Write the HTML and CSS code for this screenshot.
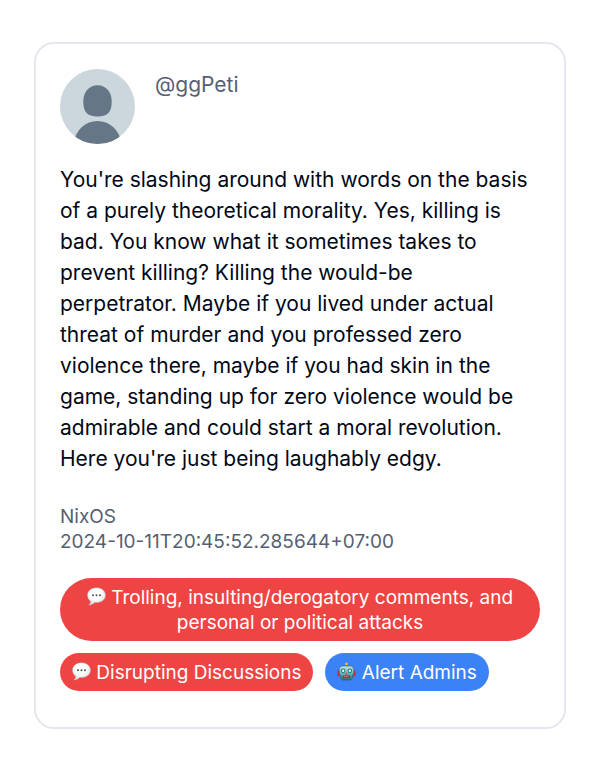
FILE: index.html
```html
<!DOCTYPE html>
<html lang="en">
<head>
<meta charset="utf-8">
<meta name="viewport" content="width=device-width, initial-scale=1">
<title>Post by @ggPeti</title>
<link rel="stylesheet" href="styles.css">
</head>
<body>
<svg class="symbols" aria-hidden="true">
  <defs>
    <radialGradient id="bubble-fill" cx="45%" cy="35%" r="65%">
      <stop offset="0.5" stop-color="#fff"/>
      <stop offset="1" stop-color="#d3d6d7"/>
    </radialGradient>
    <linearGradient id="robot-fill" x1="0" y1="0" x2="0" y2="1">
      <stop offset="0" stop-color="#c4e4e4"/>
      <stop offset="0.5" stop-color="#74b4ba"/>
      <stop offset="1" stop-color="#2f6770"/>
    </linearGradient>
    <symbol id="bubble" viewBox="0 0 20 20">
      <path d="M10 .8C4.700.8.500 4.100.500 8.700c0 2.800 1.400 4.900 3.300 6.200-.1 1.700-.8 3-2 4.100 2.600 0 4.800-1.100 6.200-2.700 6.400.7 11.500-2.600 11.500-7.600C19.500 4.100 15.300.8 10 .8z" fill="url(#bubble-fill)" stroke="#c5b4b4" stroke-width=".4"/>
      <g fill="#494949"><circle cx="6.300" cy="8.700" r="1"/><circle cx="10" cy="8.700" r="1"/><circle cx="13.700" cy="8.700" r="1"/></g>
    </symbol>
    <symbol id="robot" viewBox="0 0 20 20">
      <path d="M9 3h2v3H9z" fill="#9c6d38"/>
      <circle cx="10" cy="2" r="1.600" fill="#f2b72e"/>
      <rect x=".5" y="9" width="2.400" height="6" rx="1" fill="#c4303c"/>
      <rect x="17.100" y="9" width="2.400" height="6" rx="1" fill="#c4303c"/>
      <path d="M5 4.200h10l2.700 2.300v5l-1.400 3V17l-2.300 2H6l-2.300-2v-2.500l-1.400-3v-5z" fill="url(#robot-fill)" stroke="#2f565e" stroke-width=".6"/>
      <circle cx="6.500" cy="9.300" r="2.400" fill="#1c7985"/><circle cx="13.500" cy="9.300" r="2.400" fill="#1c7985"/>
      <circle cx="6.500" cy="9.300" r="1.300" fill="#e0ffff"/><circle cx="13.500" cy="9.300" r="1.300" fill="#e0ffff"/>
      <path d="M10 10.500l1.200 2.400H8.800z" fill="#e03d40"/>
      <rect x="6.200" y="14.200" width="7.600" height="2.400" rx=".7" fill="#8b3035"/>
      <path d="M7.500 15.400h5" stroke="#e0c8c0" stroke-width=".8" stroke-dasharray="1 .7"/>
    </symbol>
  </defs>
</svg>
<main class="page">
  <article class="card">
    <header class="author">
      <svg class="avatar" viewBox="0 0 75 75" role="img" aria-label="Default avatar">
        <defs><clipPath id="avatar-clip"><circle cx="37.500" cy="37.500" r="37.500"/></clipPath></defs>
        <g clip-path="url(#avatar-clip)">
          <path d="M0 0h75v75H0z" fill="#ccd6dd"/>
          <path d="M37.500 16.300c8.500 0 14.200 6.800 14.200 16 0 10.500-3.500 15.200-14.200 15.200s-14.200-4.700-14.200-15.200c0-9.200 5.700-16 14.200-16z" fill="#657786"/>
          <path d="M13 75c3-14.500 12.500-23 24.500-23S59 60.500 62 75z" fill="#657786"/>
        </g>
      </svg>
      <span class="handle">@ggPeti</span>
    </header>
    <p class="message">You're slashing around with words on the basis of a purely theoretical morality. Yes, killing is bad. You know what it sometimes takes to prevent killing? Killing the would-be perpetrator. Maybe if you lived under actual threat of murder and you professed zero violence there, maybe if you had skin in the game, standing up for zero violence would be admirable and could start a moral revolution. Here you're just being laughably edgy.</p>
    <footer class="meta">
      <div>NixOS</div>
      <time datetime="2024-10-11T20:45:52.285644+07:00">2024-10-11T20:45:52.285644+07:00</time>
    </footer>
    <div class="actions">
      <button class="pill" type="button"><svg class="icon" aria-hidden="true"><use href="#bubble"/></svg> Trolling, insulting/derogatory comments, and personal or political attacks</button>
      <button class="pill" type="button"><svg class="icon" aria-hidden="true"><use href="#bubble"/></svg> Disrupting Discussions</button>
      <button class="pill pill-blue" type="button"><svg class="icon" aria-hidden="true"><use href="#robot"/></svg> Alert Admins</button>
    </div>
  </article>
</main>
</body>
</html>
```
FILE: styles.css
```css
* {
  box-sizing: border-box;
}

body {
  margin: 0;
  background: #fff;
  color: #020817;
  font-family: Inter, "Liberation Sans", sans-serif;
}

.symbols {
  position: absolute;
  width: 0;
  height: 0;
}

.page {
  padding: 42px 34px 32px;
}

.card {
  padding: 25px 24px 36px;
  border: 2px solid #e6e7ee;
  border-radius: 20px;
}

.author {
  display: flex;
  gap: 20px;
}

.avatar {
  flex: none;
  width: 75px;
  height: 75px;
}

.handle {
  color: #565f73;
  font-size: 21px;
  line-height: 31px;
}

.message {
  margin: 20px 0 30px;
  padding-right: 8px;
  font-size: 21px;
  line-height: 31px;
}

.meta {
  color: #565f73;
  font-size: 19px;
  line-height: 25px;
}

.actions {
  display: flex;
  flex-wrap: wrap;
  gap: 12px;
  margin-top: 24px;
}

.pill {
  padding: 7px 12px 6px;
  border: 0;
  border-radius: 32px;
  background: #ef4444;
  color: #fff;
  font-family: inherit;
  font-size: 19px;
  font-weight: 400;
  line-height: 25px;
  text-align: center;
}

.pill-blue {
  background: #3b82f6;
}

.icon {
  width: 19px;
  height: 19px;
  vertical-align: -2px;
}
```
